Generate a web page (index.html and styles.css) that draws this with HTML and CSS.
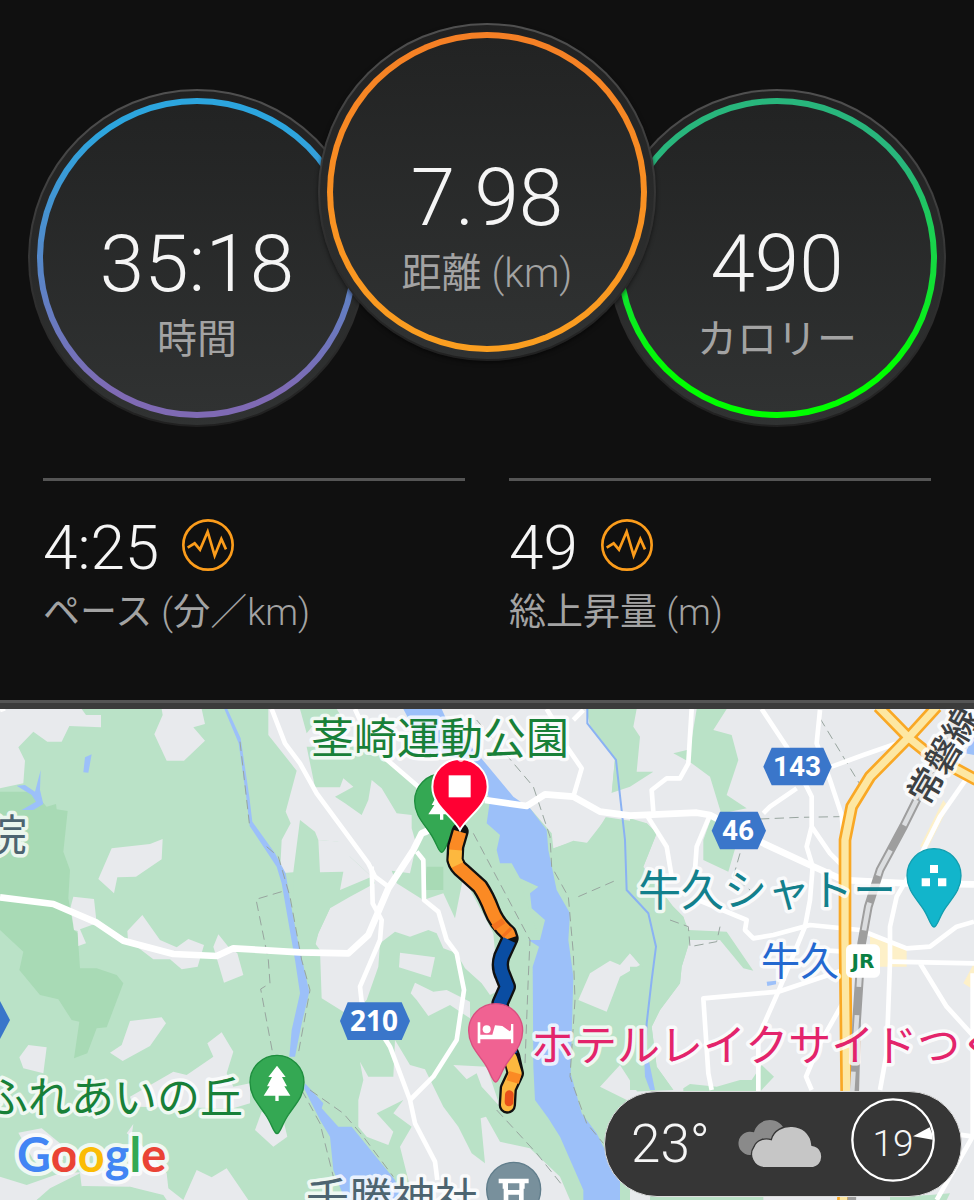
FILE: index.html
```
<!DOCTYPE html>
<html lang="ja">
  <head>
    <meta charset="UTF-8" />
    <meta name="viewport" content="width=device-width, initial-scale=1.0" />
    <title>ランニング記録</title>
    <link rel="stylesheet" href="styles.css" />
  </head>
  <body>
    <main class="activity">
      <section class="dials">
        <div class="dial dial-time">
          <div class="ring">
            <div class="face">
              <div class="dial-value">35:18</div>
              <div class="dial-label">時間</div>
            </div>
          </div>
        </div>
        <div class="dial dial-distance">
          <div class="ring">
            <div class="face">
              <div class="dial-value">7.98</div>
              <div class="dial-label">距離 <span class="unit">(km)</span></div>
            </div>
          </div>
        </div>
        <div class="dial dial-calories">
          <div class="ring">
            <div class="face">
              <div class="dial-value">490</div>
              <div class="dial-label">カロリー</div>
            </div>
          </div>
        </div>
      </section>

      <section class="stats">
        <div class="stat">
          <div class="stat-row">
            <span class="stat-value">4:25</span>
            <svg class="stat-icon" viewBox="0 0 156 156" aria-hidden="true">
              <circle cx="78" cy="78" r="74" />
              <path d="M17 86L38 73L54 92L77 38L98 110L118 60L132 91" />
            </svg>
          </div>
          <div class="stat-label">ペース <span class="unit">(</span>分<span class="unit">／km)</span></div>
        </div>
        <div class="stat">
          <div class="stat-row">
            <span class="stat-value">49</span>
            <svg class="stat-icon" viewBox="0 0 156 156" aria-hidden="true">
              <circle cx="78" cy="78" r="74" />
              <path d="M17 86L38 73L54 92L77 38L98 110L118 60L132 91" />
            </svg>
          </div>
          <div class="stat-label">総上昇量 <span class="unit">(m)</span></div>
        </div>
      </section>
    </main>

    <section class="map">
      <svg class="map-canvas" viewBox="0 0 974 491">
        <defs>
          <path id="pin" d="M0 154C-10 154-15 124-35 96C-55 66-81 42-81 0A81 81 0 0 1 81 0C81 42 55 66 35 96C15 124 10 154 0 154Z" />
          <path id="tree" d="M0-50L26-16H15L30 12H22L40 40H5V56H-5V40H-40L-22 12H-30L-15-16H-26Z" />
        </defs>

        <svg width="974" height="491" viewBox="0 0 2922 1473">
          <rect class="green" width="2922" height="1473" />

          <!-- north west -->
          <g transform="translate(0 -27)">
            <path class="forest" d="M0 275L100 275L140 320L168 312L170 328L203 333L190 455L210 510L205 595L222 690L233 700L240 805L290 805L350 825L370 850L320 982L290 985L262 1060L222 1075L238 965L215 960L175 898L120 885L58 810L70 755L0 690Z" />
            <path class="town" d="M0 27H245L258 45H303V82L208 78L185 125H142L100 95L55 142L75 182L70 250L0 265Z" />
            <path class="town" d="M485 27H605L615 72L580 82L615 122L552 182H500L463 103L488 45Z" />
            <path class="town" d="M335 445L450 432L488 417L485 478L408 530L352 532L342 580L295 537Z" />
            <path class="town" d="M220 590L282 597L290 670L240 688L258 730L235 738L233 693L222 690L212 620Z" />
            <path class="town" d="M382 693L427 645L480 720L530 742L565 717L612 735L593 800L545 808L510 778L460 778L384 720Z" />
            <path class="town" d="M655 703L640 740L672 848L730 825L712 760L685 740Z" />
            <path class="water" d="M50 257L75 255L105 275L122 210L120 270L130 312L100 330L65 330L108 305L95 285Z" />
            <path class="water" d="M250 217L255 172L275 163L265 218Z" />
          </g>

          <!-- south west -->
          <g transform="translate(0 693)">
            <path class="town" d="M390 243L485 232L498 250L450 318L368 363L330 338L365 315Z" />
            <path class="town" d="M85 315L140 322L130 400L70 385L58 352Z" />
            <path class="town" d="M665 277L700 335L680 400L700 440L750 430V490L700 505L400 500L390 470L520 395L560 405L640 350L622 310Z" />
            <path class="town" d="M785 515L765 570L820 620L862 590L850 540Z" />
            <path class="town" d="M55 578L125 565L180 610L190 660L100 660Z" />
            <path class="town" d="M400 552L380 580L420 610L500 700L505 745L550 780L590 690L635 712L680 685L745 780H500L490 765L390 740L250 780L240 700L150 745L110 780H0V710L80 735L180 700L380 690Z" />
            <path class="green" d="M110 780L160 750L250 738L390 740L500 780Z" />
          </g>

          <!-- around the park -->
          <g transform="translate(900 -27)">
            <path class="town" d="M-95 27H0L20 60L60 27H860L870 75L945 175L930 330L870 430L820 422L750 450L560 300L440 420L350 400L365 600L490 530L580 700L590 810L600 870L570 885L545 850L495 805L470 760L430 745L410 700L385 690L330 710L285 695L240 730L235 800L200 900L160 940L130 935L65 895L60 750L45 730L55 700L90 625L0 515L-60 520L-55 420L-28 370L-43 335L-10 212L-95 105Z" />
            <path class="green" d="M0 27H110L130 60L40 75L20 100Z" />
            <path class="green" d="M20 140L45 262H120L130 235L160 260L105 290L135 310L185 345L205 300L215 240L245 265L290 340L335 345L335 385L345 420L380 385L390 355L345 300L350 255L250 170L200 140Z" />
            <path class="green" d="M0 360L45 395L55 420L115 425L125 455L150 470L215 530L225 550L150 590L90 625L55 700L45 740H-20V515L0 360Z" />
            <path class="town" d="M60 517L130 515L120 570L215 530L150 470L125 425L55 420Z" />
            <path class="green" d="M275 512L330 520L350 430L400 390L500 400L525 270L570 290L720 720V860H600L590 780L620 700L540 560L490 530L465 655L430 580L370 600L290 550Z" />
            <path class="forest" d="M380 500H430V570H375Z" />
            <path class="green" d="M690 325L755 400L760 445L820 425L860 430L930 340L945 175L870 75L860 27H1020V870H800L810 640L770 570Z" />
          </g>

          <!-- south of the park -->
          <g transform="translate(900 693)">
            <path class="town" d="M300 38L405 52L392 112L297 82Z" />
            <path class="town" d="M345 128L400 155L440 150L510 185V235L450 195L385 228L350 180L332 160Z" />
            <path class="town" d="M180 365L205 410L280 410L285 300L330 375L375 388L430 500L475 560L515 640L555 670L542 535L558 530L600 605L690 625L780 710L810 780H340L300 620L335 560L280 520L310 480L230 520L280 575L265 615L200 590L175 560V480L190 420Z" />
            <path class="town" d="M460 375L560 380L600 500L545 440L530 400L500 418Z" />
            <path class="town" d="M835 180L870 100L930 62L960 75L990 40L1020 75L960 110L920 215Z" />
            <path class="town" d="M900 440L960 375L1060 530L1000 490Z" />
          </g>

          <!-- east side -->
          <g transform="translate(1890 -27)">
            <path class="town" d="M20 27H1032V1500H0V1175L130 1170L80 1100L65 980L90 930L150 850L155 800L180 720L160 650L130 620L0 520L40 500L80 400L50 370L-80 350L-90 290L0 260L70 215L20 215L30 110L10 80Z" />
            <path class="green" d="M200 27H290L250 90L305 105L325 180L290 285L350 325L300 335L320 430L295 515L220 480V420L245 350L275 345L240 230L185 190L130 160L180 148Z" />
            <path class="green" d="M0 355L50 370L80 400L40 500L130 620L160 650L175 690L290 695L370 812L340 805L270 720H180L155 800L150 850L90 930L65 980L80 1100L130 1170H0V800L40 800L0 760Z" />
            <path class="green" d="M160 1165L180 1152L260 1160L330 1140L365 1140L395 1095L432 1130L390 1175H160Z" />
            <path class="green" d="M60 1480L200 1490H400V1500H60ZM780 1490L900 1485L960 1480L950 1500H780Z" />
            <path class="sand" d="M720 700L830 740V800L720 800ZM1000 850L1032 790V870ZM940 300L870 440L895 440L955 320Z" />
            <path class="water" d="M1005 160L1032 110V165ZM410 845L438 842V853L412 858Z" />
          </g>

          <!-- water -->
          <g transform="translate(0 -27)">
            <path class="water" d="M673 27H682L722 115L748 290L757 365L825 460L857 520L870 600L893 720L928 875L903 980L885 1070H868L875 990L900 880L885 780L845 550L830 500L749 378L740 300L716 130Z" />
            <path class="water" d="M915 1150L970 1210L965 1225L1015 1280H1055L1185 1440L1210 1500H1035L1000 1410L990 1310L960 1260L912 1165Z" />
            <path class="water" d="M1210 27H1325L1340 60L1440 170L1540 290L1590 325L1640 390L1645 450L1670 570L1710 640L1705 720L1720 830L1712 1120L1745 1240L1790 1300L1860 1440V1500H1750V1470L1680 1310L1645 1255L1605 1200L1600 1100L1598 800L1617 740L1585 720H1620L1635 660L1595 625L1590 580L1615 560L1560 535L1535 490H1500L1490 450L1500 405L1460 370L1470 300L1420 180L1280 160Z" />
            <path class="stream" d="M1762 27V70L1848 180L1875 420L1880 570L1945 640L1968 740L1955 840L1940 970L1935 1090" />
            <path class="water" d="M1932 1060L1942 1060L1965 1170H1950L1935 1130Z" />
          </g>

          <!-- borders -->
          <g class="border" transform="translate(0 -27)">
            <path d="M720 125L748 370M800 440L835 470L870 590L905 780L930 870L895 1060M845 575L768 598L805 780L810 850L782 867L820 1070M905 1170L960 1270L1000 1430M930 1170L1030 1240L1090 1310L1180 1430" />
            <path d="M1430 60L1600 260L1650 410L1655 500L1705 590L1720 760L1725 900L1710 1130L1760 1270L1810 1330M1420 400L1590 720L1585 830L1575 1090M1490 1230L1610 1360L1690 1460M1735 590L1850 540" />
            <path d="M2460 55L2590 270M2280 357L2400 352L2520 350M2220 460L2200 530L2250 570M2010 660L2065 680L2070 740L2150 725L2160 680" />
          </g>

          <!-- roads -->
          <g class="road" transform="translate(0 -27)">
            <path class="wide" d="M0 592L160 612L290 668L370 722L520 762L650 768L700 745L900 757L1045 760L1105 705L1165 565L1240 450L1265 400L1310 380" />
            <path d="M815 27L855 130L900 190L950 280L1105 490L1125 530L1165 560M0 30L15 25" />
            <path d="M1115 500L1118 610L1145 660L1140 720L1080 860L1085 905L1170 1040L1230 1200L1245 1270L1305 1385L1312 1440" />
            <path d="M1250 455L1270 480L1272 600L1315 635L1340 720L1370 760L1392 870L1370 1020L1300 1130L1230 1200" />
            <path d="M1065 27L1080 60M1150 170L1255 260M1640 27L1660 60M1750 30L1720 60M1720 290L1745 205L1700 140" />
            <path class="wide" d="M1455 300L1580 318L1635 283L1720 290L1800 335L1890 347L2090 338L2130 345L2290 430L2430 495L2530 540L2720 550L2922 553" />
            <g transform="translate(1890 0)">
              <path d="M185 27L175 190L150 235H110L65 270L70 335M50 345L110 440L125 530M240 345L200 440L195 510" />
              <path d="M395 27L470 140L545 290V380L530 440L548 500L540 600L525 680L445 875L385 1010V1175" />
              <path d="M570 30L560 130L600 240L635 345L640 400M400 340L420 320L500 265M605 200L700 165L800 130M545 380L600 460L640 500" />
              <path d="M205 600L350 660L345 690L370 715L430 705L540 675L690 690L830 745L900 740L980 680L1032 665" />
              <path d="M1010 235L930 350L870 470L800 590L780 680V785L770 1060L750 1170" />
              <path d="M780 785L1032 790M870 790L950 920L1032 1010M640 810L445 875L220 895L235 1120L245 1170M635 915L570 1030L528 1130L545 1170M1028 820V1310L920 1500M960 1300L1032 1310M560 750L650 755" />
            </g>
          </g>

          <!-- highway and railway -->
          <g transform="translate(1890 -27)">
            <path class="highway-edge" d="M920 20L838 110L720 230L665 320L645 420V720L650 1180L640 1510M745 20L838 115L900 165L1040 240" />
            <path class="highway" d="M920 20L838 110L720 230L665 320L645 420V720L650 1180L640 1510M745 20L838 115L900 165L1040 240" />
            <path class="rail" d="M1000 20L860 300L820 380L750 510L715 620L695 730L680 960L665 1510" />
            <path class="rail-dash" d="M860 300L820 380L750 510L715 620L695 730L680 960L665 1200" />
          </g>

          <!-- park pin sits below the track -->
          <g transform="translate(1325 276)">
            <use href="#pin" class="pin-green" />
            <use href="#tree" class="mark" />
          </g>

          <!-- track -->
          <g class="track" transform="translate(900 -27)">
            <path class="track-edge" d="M480 395L467 440L465 480Q470 500 490 515L540 560Q560 590 575 630Q590 670 625 700L630 715L605 770Q595 800 610 830L622 860L600 910L615 1020L635 1070L646 1120L625 1165L622 1215" />
            <path class="track-orange" d="M480 395L467 440L465 480Q470 500 490 515L540 560Q560 590 575 630Q590 670 625 700L630 715" />
            <path class="track-yellow" d="M467 450L465 480L472 495" />
            <path class="track-deep" d="M590 665L600 680M618 693L625 700" />
            <path class="track-blue" d="M628 720L605 770Q595 800 610 830L622 860L600 910L615 1020L635 1065" />
            <path class="track-yellow round" d="M632 1075L646 1120L625 1165L622 1215" />
            <path class="track-orange" d="M646 1118L638 1146" />
            <path class="track-red" d="M628 1184L627 1206" />
          </g>

          <!-- place pins -->
          <g class="finish" transform="translate(1380 233)">
            <path d="M0 130C-22 88-83 58-83 0A83 83 0 0 1 83 0C83 58 22 88 0 130Z" />
            <rect x="-34" y="-34" width="66" height="66" />
          </g>
          <g transform="translate(1487 965)">
            <use href="#pin" class="pin-pink" />
            <path class="mark" d="M-54-25H-46V12H-10L-2-16L20-14L42 2L46-2V-20H53V38H46V26H-46V38H-54Z" />
            <circle class="mark" cx="-27" cy="-4" r="12" />
          </g>
          <g transform="translate(831 1120)">
            <use href="#pin" class="pin-green" />
            <use href="#tree" class="mark" />
          </g>
          <g transform="translate(2802 500)">
            <use href="#pin" class="pin-teal" />
            <path class="mark" d="M-12-32H12V-8H-12ZM-37 8H-12V32H-37ZM12 8H37V32H12Z" />
          </g>
          <g transform="translate(1541 1441)">
            <use href="#pin" class="pin-slate" />
            <path class="mark" d="M-45-32H45V-18H33V-2H30V40H16V16H-16V40H-30V-2H-33V-18H-45ZM-17-18V2H17V-18Z" />
          </g>

          <!-- route shields -->
          <g class="shield">
            <path d="M1020 936L1043 880H1205L1230 936L1205 993H1043Z" />
            <path d="M-40 876H0L30 933L0 990H-40Z" />
            <path d="M2290 173L2315 116H2470L2495 173L2470 229H2315Z" />
            <path d="M2135 365L2160 308H2273L2298 365L2273 421H2160Z" />
          </g>
          <rect class="station" x="2538" y="706" width="102" height="100" rx="16" />
        </svg>

        <!-- labels -->
        <g class="label">
          <text class="park" x="311" y="45">茎崎運動公園</text>
          <text class="park" x="-15" y="404">ふれあいの丘</text>
          <text class="slate" x="-16" y="142">院</text>
          <text class="slate" x="306" y="505">千勝神社</text>
          <text class="teal" x="638" y="197">牛久シャトー</text>
          <text class="pink" x="531" y="352">ホテルレイクサイドつく</text>
          <text class="blue" x="761" y="266">牛久</text>
          <text class="line" transform="translate(928 98) rotate(-60)">常磐線</text>
        </g>
        <g class="shield-text">
          <text x="797" y="67">143</text>
          <text x="738" y="131">46</text>
          <text class="noto" x="374" y="322">210</text>
        </g>
        <text class="jr" x="863" y="259">JR</text>
        <text class="google" x="17" y="463"><tspan class="g-blue">G</tspan><tspan class="g-red">o</tspan><tspan class="g-yellow">o</tspan><tspan class="g-blue">g</tspan><tspan class="g-green">l</tspan><tspan class="g-red">e</tspan></text>
      </svg>

      <div class="weather">
        <span class="temperature">23°</span>
        <svg class="clouds" viewBox="0 0 252 144" aria-hidden="true">
          <path class="cloud-back" d="M35 105A35 35 0 1 1 48 37C60-10 130-15 143 40L60 105Z" />
          <path class="cloud-front" d="M78 143A40 40 0 0 1 48 80C55 60 80 52 100 59C112 5 215 0 222 76C262 80 262 143 218 143Z" />
        </svg>
        <div class="wind">
          <svg class="wind-dial" viewBox="0 0 252 252" aria-hidden="true">
            <circle cx="126" cy="126" r="122" />
            <path d="M186 115L236 88Q245 105 245 125Z" />
          </svg>
          <span class="wind-speed">19</span>
        </div>
      </div>
    </section>
  </body>
</html>
```

FILE: styles.css
```
* {
  margin: 0;
  padding: 0;
  box-sizing: border-box;
}

body {
  background: #101010;
  color: #f5f5f5;
  font-family: Roboto, "Noto Sans CJK JP", sans-serif;
  font-weight: 300;
}

.activity {
  border-bottom: 6px solid #3b3b3b;
  box-shadow: inset 0 -3px 0 #555;
}

/* dials */
.dials {
  display: flex;
  justify-content: center;
  align-items: flex-end;
  padding-top: 23px;
}

.dial {
  width: 338px;
  height: 338px;
  padding: 7px;
  border-radius: 50%;
  border: 2px solid transparent;
  background: linear-gradient(#212121, #303232) padding-box,
    linear-gradient(#505050, #303030 60%, #202020) border-box;
}

.dial-distance {
  position: relative;
  margin: 0 -48px 66px;
  box-shadow: 0 2px 4px rgba(0, 0, 0, 0.5);
}

.ring {
  height: 100%;
  padding: 6px;
  border-radius: 50%;
}

.dial-time .ring {
  background: linear-gradient(#2ca5de 10%, #7f6ab4 92%);
}

.dial-distance .ring {
  background: linear-gradient(#f57f25, #fb9f20);
}

.dial-calories .ring {
  background: linear-gradient(#28b67c 20%, #00ff00 85%);
}

.face {
  height: 100%;
  padding-top: 112px;
  border-radius: 50%;
  background: linear-gradient(#222323, #303232);
  text-align: center;
}

.dial-value {
  font-size: 80px;
  line-height: 96px;
}

.dial-label {
  color: #a3a3a3;
  font-size: 40px;
  font-weight: 400;
  line-height: 56px;
}

.unit {
  font-weight: 300;
}

/* stats */
.stats {
  display: grid;
  grid-template-columns: 1fr 1fr;
  gap: 44px;
  padding: 51px 43px 62px;
}

.stat {
  padding-top: 30px;
  border-top: 3px solid #555;
}

.stat-row {
  display: flex;
  align-items: center;
  gap: 23px;
}

.stat-value {
  font-size: 62px;
  line-height: 74px;
}

.stat-icon {
  width: 52px;
  height: 52px;
  margin-bottom: 6px;
  fill: none;
  stroke: #fb9c1b;
  stroke-width: 8;
}

.stat-label {
  color: #a3a3a3;
  font-size: 37px;
  font-weight: 400;
  line-height: 56px;
}

/* map */
.map {
  position: relative;
  overflow: hidden;
}

.map-canvas {
  display: block;
  width: 100%;
  height: auto;
}

.green {
  fill: #bae2c7;
}

.forest {
  fill: #a8dab5;
}

.town {
  fill: #e8eaed;
}

.sand {
  fill: #fdf0c8;
}

.water {
  fill: #9cc0f9;
}

.stream {
  fill: none;
  stroke: #8ab2f3;
  stroke-width: 6;
}

.border {
  fill: none;
  stroke: #98a59f;
  stroke-width: 3;
  stroke-dasharray: 28 16;
}

.road {
  fill: none;
  stroke: #fff;
  stroke-width: 14;
  stroke-linejoin: round;
}

.road .wide {
  stroke-width: 20;
}

.highway-edge {
  fill: none;
  stroke: #f9a825;
  stroke-width: 38;
}

.highway {
  fill: none;
  stroke: #fde7a2;
  stroke-width: 22;
}

.rail {
  fill: none;
  stroke: #9e9e9e;
  stroke-width: 26;
}

.rail-dash {
  fill: none;
  stroke: #dcdee0;
  stroke-width: 14;
  stroke-dasharray: 85 85;
}

.track {
  fill: none;
  stroke-width: 38;
  stroke-linejoin: round;
}

.track-edge {
  stroke: #111;
  stroke-width: 52;
  stroke-linecap: round;
}

.track-orange {
  stroke: #fb8a24;
}

.track-yellow {
  stroke: #fdb83f;
}

.track-deep {
  stroke: #f4731f;
}

.track-red {
  stroke: #e8501a;
  stroke-width: 26;
  stroke-linecap: round;
}

.track-blue {
  stroke: #0a4da2;
}

.round {
  stroke-linecap: round;
}

.finish path {
  fill: #ff0033;
  stroke: #fff;
  stroke-width: 6;
}

.finish rect,
.mark,
.station {
  fill: #fff;
}

.mark {
  fill-rule: evenodd;
}

.pin-green {
  fill: #34a853;
  stroke: #1e8e3e;
  stroke-width: 4;
}

.pin-pink {
  fill: #f06292;
  stroke: #d84f80;
  stroke-width: 4;
}

.pin-teal {
  fill: #12b5cb;
  stroke: #129eaf;
  stroke-width: 4;
}

.pin-slate {
  fill: #78909c;
  stroke: #607d8b;
  stroke-width: 4;
}

.shield path {
  fill: #3a76ca;
}

.label {
  font-family: "Noto Sans CJK JP", sans-serif;
  font-size: 43px;
  font-weight: 400;
  stroke: rgba(255, 255, 255, 0.8);
  stroke-width: 7px;
  stroke-linejoin: round;
  paint-order: stroke;
}

.park {
  fill: #188038;
}

.slate {
  fill: #4d6470;
}

.teal {
  fill: #12808c;
}

.pink {
  fill: #e3246b;
}

.blue {
  fill: #2368d0;
  font-size: 39px;
}

.line {
  fill: #3c4043;
  font-size: 35px;
  font-weight: 500;
}

.shield-text {
  fill: #fff;
  font-size: 28px;
  font-weight: 700;
  text-anchor: middle;
}

.noto {
  font-family: "Noto Sans", sans-serif;
}

.jr {
  fill: #0a8043;
  font-family: "DejaVu Sans", sans-serif;
  font-size: 20px;
  font-weight: 700;
  text-anchor: middle;
}

.google {
  font-family: Lato, sans-serif;
  font-size: 47px;
  font-weight: 700;
  stroke: rgba(255, 255, 255, 0.8);
  stroke-width: 8px;
  stroke-linejoin: round;
  paint-order: stroke;
}

.g-blue {
  fill: #4285f4;
}

.g-red {
  fill: #ea4335;
}

.g-yellow {
  fill: #fbbc05;
}

.g-green {
  fill: #34a853;
}

/* weather */
.weather {
  position: absolute;
  right: 12px;
  bottom: 3px;
  display: flex;
  align-items: center;
  justify-content: space-between;
  width: 358px;
  height: 106px;
  padding: 0 26px;
  border: 1px solid #ddd;
  border-radius: 53px;
  background: #363636;
}

.temperature {
  font-size: 53px;
  line-height: 60px;
}

.clouds {
  width: 84px;
  height: 48px;
}

.cloud-back {
  fill: #8a8a8a;
}

.cloud-front {
  fill: #c6c6c6;
  stroke: #363636;
  stroke-width: 4;
}

.wind {
  display: grid;
  place-items: center;
  margin-bottom: 8px;
}

.wind-dial,
.wind-speed {
  grid-area: 1 / 1;
}

.wind-dial {
  width: 84px;
  height: 84px;
}

.wind-dial circle {
  fill: none;
  stroke: #fff;
  stroke-width: 7;
}

.wind-dial path {
  fill: #fff;
}

.wind-speed {
  padding-top: 8px;
  font-size: 37px;
  line-height: 40px;
}
```
